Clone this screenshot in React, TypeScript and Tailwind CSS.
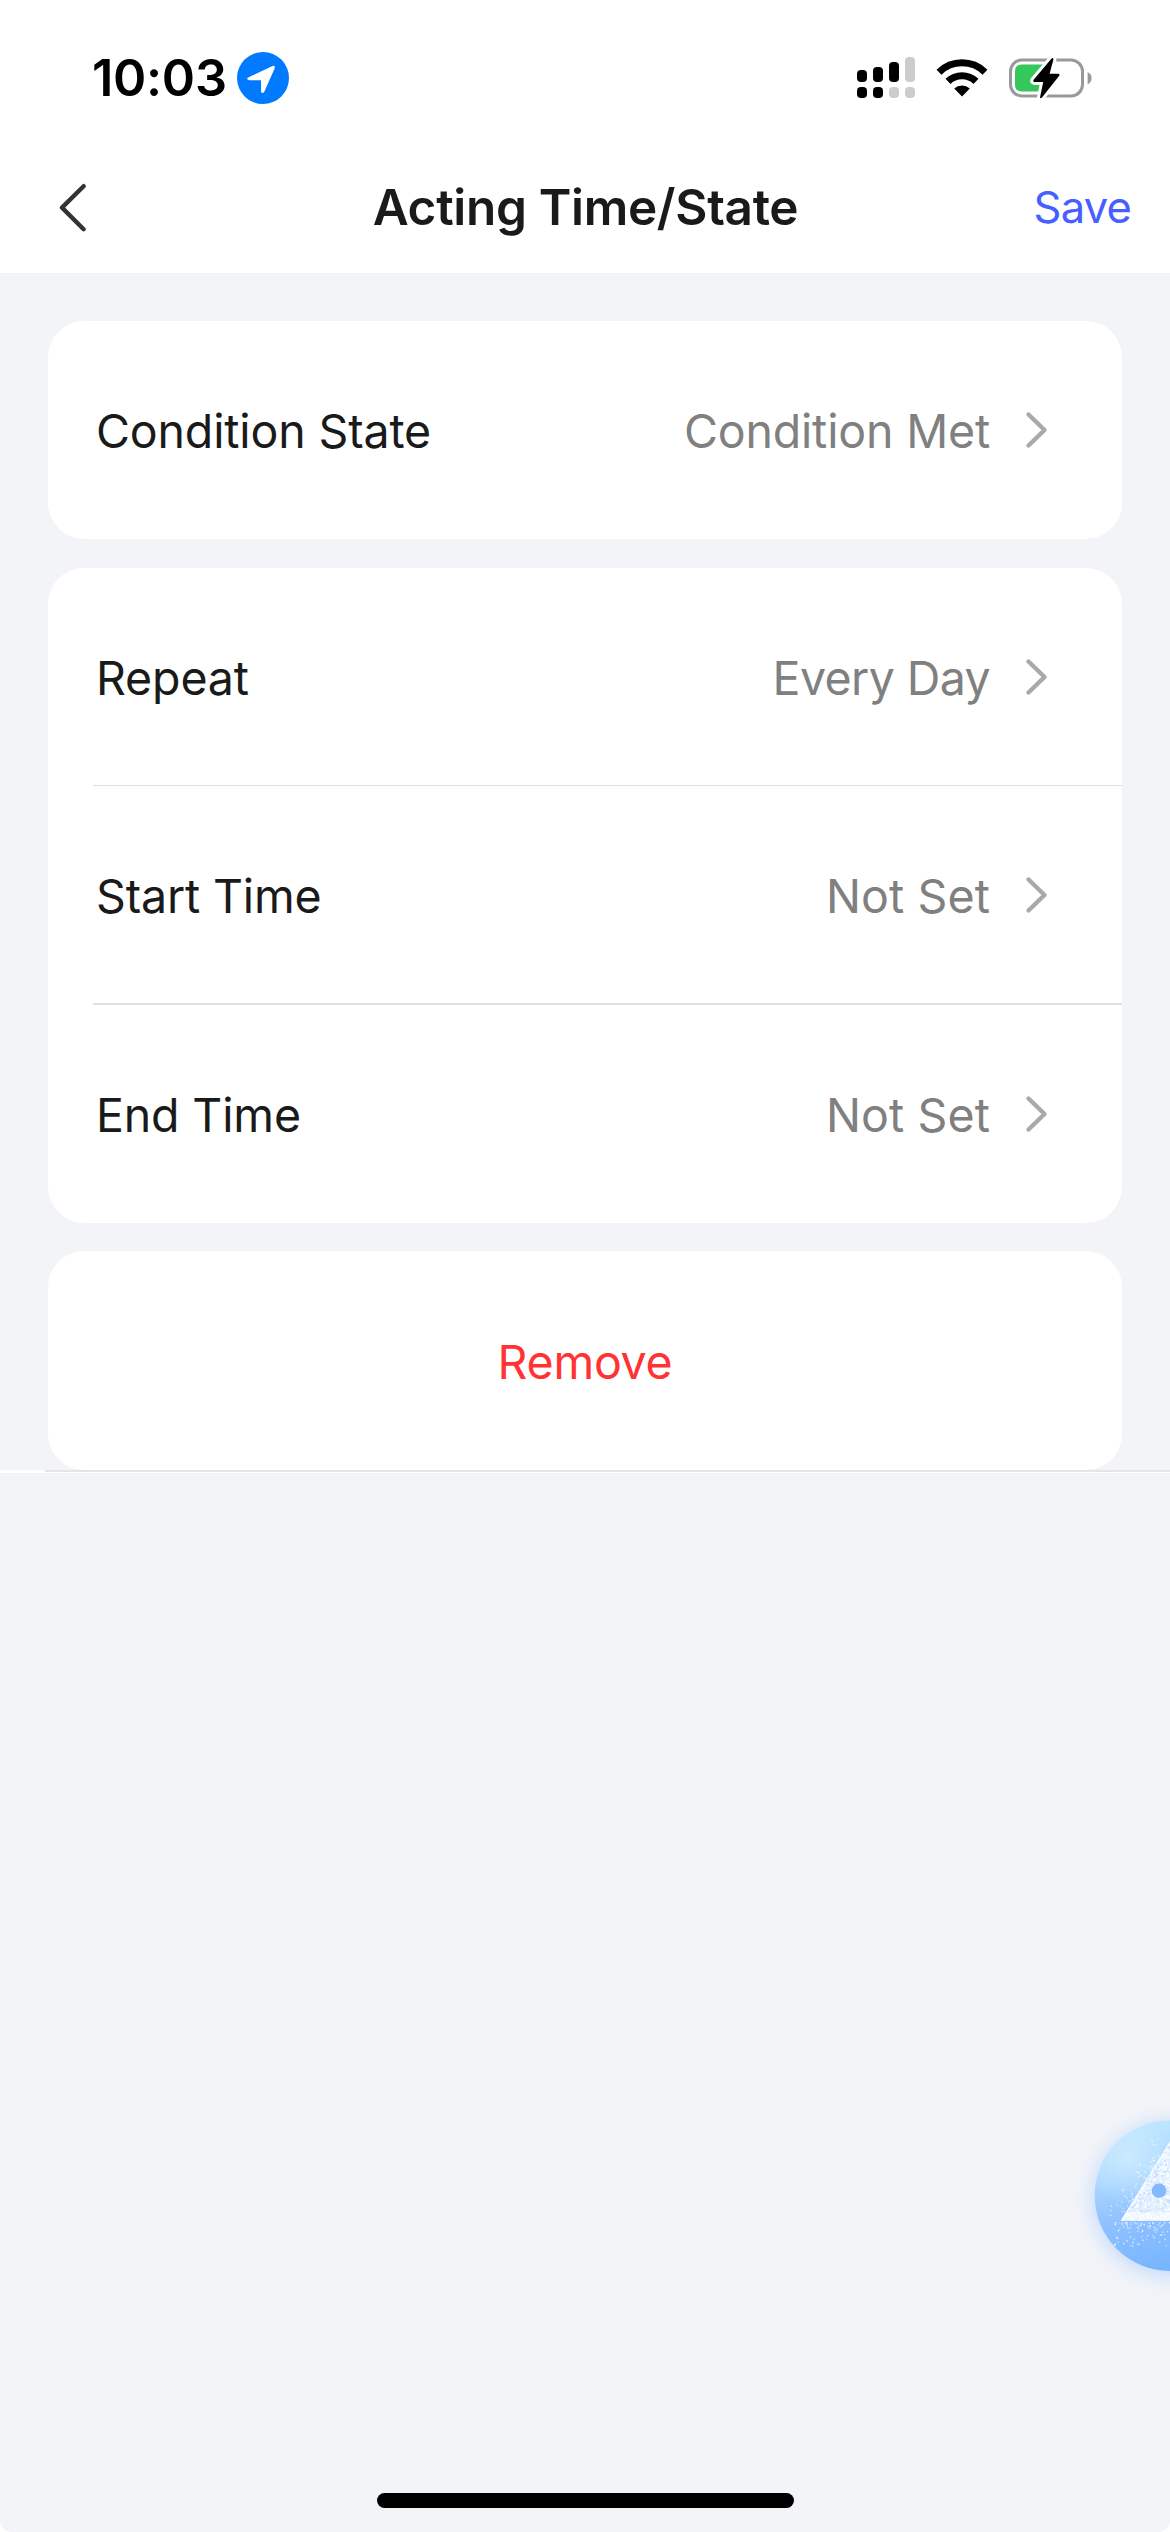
function StatusBar() {
  return (
    <div className="h-[141px] pt-[15px] pl-[92px] pr-[78px] flex items-center justify-between">
      <div className="flex items-center">
        <span className="w-[145px] text-[50.5px] font-semibold tracking-[-0.3px] text-black">10:03</span>
        <svg className="w-[52px] h-[52px]" viewBox="0 0 52 52">
          <circle cx="26" cy="26" r="26" fill="#007aff" />
          <path
            d="M11.2 25.4 L35 14.2 Q38.6 12.8 37.6 16.4 L27.4 39.4 Q25.6 42.6 24 39.4 V28.2 H12.4 Q8.4 27.4 11.2 25.4 Z"
            fill="#fff"
          />
        </svg>
      </div>
      <div className="flex items-center">
        <svg className="w-[58px] h-[42px]" viewBox="0 0 58 42">
          <rect x="0" y="13" width="10" height="12" rx="4" />
          <rect x="16" y="10" width="10" height="15" rx="4" />
          <rect x="32" y="5" width="10" height="20" rx="4" />
          <rect x="48" y="0" width="10" height="25" rx="4" fill="#ccc" />
          <rect x="0" y="30" width="10" height="11" rx="4" />
          <rect x="16" y="30" width="10" height="11" rx="4" />
          <rect x="32" y="30" width="10" height="11" rx="4" fill="#ccc" />
          <rect x="48" y="30" width="10" height="11" rx="4" fill="#ccc" />
        </svg>
        <svg className="w-[52px] h-[38px] ml-[21px]" viewBox="0 0 52 38">
          <path d="M3 13.2 A33 33 0 0 1 49 13.2" fill="none" stroke="#000" strokeWidth="7" />
          <path d="M12 22.4 A20.2 20.2 0 0 1 40 22.4" fill="none" stroke="#000" strokeWidth="7.2" />
          <path d="M26 37.4 L18.2 29.6 A11.4 11.4 0 0 1 33.8 29.6 Z" />
        </svg>
        <svg className="w-[83px] h-[44px] ml-[21px]" viewBox="0 0 83 44">
          <rect x="1.5" y="4" width="72" height="36" rx="11.5" fill="none" stroke="#999" strokeWidth="3" />
          <path d="M78.6 16 Q82.6 18 82.6 22.3 Q82.6 26.4 78.6 28.4 Z" fill="#999" />
          <path d="M13 8.5 H38 V35.5 H13 Q6 35.5 6 28.5 V15.5 Q6 8.5 13 8.5 Z" fill="#34c759" />
          <path
            d="M42.6 2.4 L24.4 24 Q23.6 26 25.4 26 H34.2 L31 41.4 Q31.6 43 33 41.4 L50.4 19.6 Q51 18 49.4 17.8 H40.6 L44.4 3.4 Q44 1.4 42.6 2.4 Z"
            stroke="#fff"
            strokeWidth="6"
            paintOrder="stroke"
            strokeLinejoin="round"
          />
        </svg>
      </div>
    </div>
  )
}

function NavBar() {
  return (
    <div className="h-[132px] pl-[58px] pr-[39px] grid grid-cols-[1fr_auto_1fr] items-center">
      <svg className="w-[30px] h-[50px]" viewBox="0 0 30 50" fill="none" stroke="#333" strokeWidth="4.4" strokeLinecap="round" strokeLinejoin="round">
        <path d="M25.6 4.2 L4 25.6 L25.6 47.2" />
      </svg>
      <h1 className="pt-[1px] text-[49.5px] font-semibold tracking-[-0.32px] text-[#1a1a1a] -ml-[18px]">Acting Time/State</h1>
      <button className="justify-self-end pt-[2px] text-[43.5px] tracking-[-0.8px] text-[#4660ff]">Save</button>
    </div>
  )
}

type RowProps = { label: string; value: string; valueClass?: string }

function Row({ label, value, valueClass = "tracking-[-0.17px]" }: RowProps) {
  return (
    <div className="h-[217px] pl-[48px] pr-[73px] flex items-center">
      <span className="pt-[3px] text-[46.5px] tracking-[-0.15px] text-[#1a1a1a]">{label}</span>
      <span className={`ml-auto pt-[3px] text-[46.5px] text-[#808080] ${valueClass}`}>{value}</span>
      <svg className="w-[24px] h-[38px] ml-[35px]" viewBox="0 0 24 38" fill="none" stroke="#a9a9ad" strokeWidth="4.4" strokeLinecap="round" strokeLinejoin="round">
        <path d="M3.5 3.5 L19.5 19 L3.5 34.5" />
      </svg>
    </div>
  )
}

// fixed pseudo random values, so the sparkles never move between renders
function speckles(count: number, seed: number) {
  let s = seed
  const next = () => {
    s = (s * 16807) % 2147483647
    return s / 2147483647
  }
  return Array.from({ length: count }, () => [next(), next(), next()])
}

const inner = speckles(600, 17)
const below = speckles(90, 91)
const side = speckles(60, 333)

function AssistantButton() {
  return (
    <svg className="absolute right-0 top-[2080px] w-[120px] h-[230px]" viewBox="0 0 120 230">
      <defs>
        <linearGradient id="orb" x1="0.35" y1="0" x2="0.6" y2="1">
          <stop offset="0" stopColor="#bfe8ff" />
          <stop offset="0.3" stopColor="#acd8ff" />
          <stop offset="0.6" stopColor="#8fc0ff" />
          <stop offset="1" stopColor="#74b4ff" />
        </linearGradient>
        <radialGradient id="shine" cx="0.22" cy="0.25" r="0.3">
          <stop offset="0" stopColor="#d0edff" stopOpacity="0.8" />
          <stop offset="1" stopColor="#d0edff" stopOpacity="0" />
        </radialGradient>
        <filter id="glow" x="-40%" y="-40%" width="180%" height="180%">
          <feGaussianBlur stdDeviation="10" />
        </filter>
        <clipPath id="tri">
          <path d="M70.7 140.8 L120 61.3 L169 140.8 Z" />
        </clipPath>
      </defs>
      <circle cx="120" cy="119" r="77" fill="#a3c8ff" opacity="0.6" filter="url(#glow)" />
      <circle cx="120" cy="115.7" r="75.3" fill="url(#orb)" />
      <circle cx="120" cy="115.7" r="75.3" fill="url(#shine)" />
      <g clipPath="url(#tri)">
        <rect x="70" y="60" width="50" height="82" fill="#e6f2ff" opacity="0.92" />
        {inner.map(([a, b, c], i) => (
          <rect key={i} x={70 + a * 50} y={60 + b * 80} width="1.6" height="1.6" fill={c > 0.3 ? "#fff" : "#bcdaff"} />
        ))}
        <rect x="70" y="132" width="50" height="9" fill="#fff" opacity="0.6" />
        <path d="M70.7 140.8 L120 61.3" stroke="#fff" strokeWidth="4" opacity="0.5" />
      </g>
      {below.map(([a, b, c], i) => (
        <rect key={i} x={64 + a * 56} y={142 + b * b * 24} width="1.4" height="1.4" fill="#fff" opacity={0.3 + c * 0.5} />
      ))}
      {side.map(([a, b, c], i) => (
        <rect key={i} x={70 + a * 48 - b * b * 16} y={138 - a * 77 - b * 4} width="1.4" height="1.4" fill="#fff" opacity={0.3 + c * 0.5} />
      ))}
      <circle cx="109" cy="110.7" r="7.3" fill="#84b9fc" />
    </svg>
  )
}

export default function App() {
  return (
    <div className="bg-white">
      <div className="relative w-[1170px] h-[2532px] overflow-hidden rounded-b-[12px] bg-[#f2f4f8] font-['Inter',sans-serif] leading-none flex flex-col">
        <header className="bg-white">
          <StatusBar />
          <NavBar />
        </header>

        <main className="pt-[48px]">
          <section className="mx-[48px] h-[218px] rounded-[36px] bg-white">
            <Row label="Condition State" value="Condition Met" />
          </section>

          <section className="mx-[48px] mt-[29px] h-[655px] rounded-[36px] bg-white">
            <Row label="Repeat" value="Every Day" valueClass="tracking-[-0.6px]" />
            <div className="ml-[45px] h-px bg-[#dedfe0]" />
            <Row label="Start Time" value="Not Set" valueClass="tracking-[0.1px]" />
            <div className="ml-[45px] h-[2px] bg-[#dde1e8]" />
            <Row label="End Time" value="Not Set" valueClass="tracking-[0.1px]" />
          </section>

          <section className="mx-[48px] mt-[28px] h-[219px] rounded-[36px] bg-white flex items-center justify-center">
            <button className="pt-[3px] text-[46.5px] tracking-[-0.25px] text-[#ff3333]">Remove</button>
          </section>
          <div className="h-[3px] bg-white">
            <div className="ml-[45px] h-[2px] bg-[#e5e5e6]" />
          </div>
        </main>

        <AssistantButton />

        <div className="mt-auto mb-[24px] mx-auto w-[417px] h-[15px] rounded-full bg-black" />
      </div>
    </div>
  )
}
